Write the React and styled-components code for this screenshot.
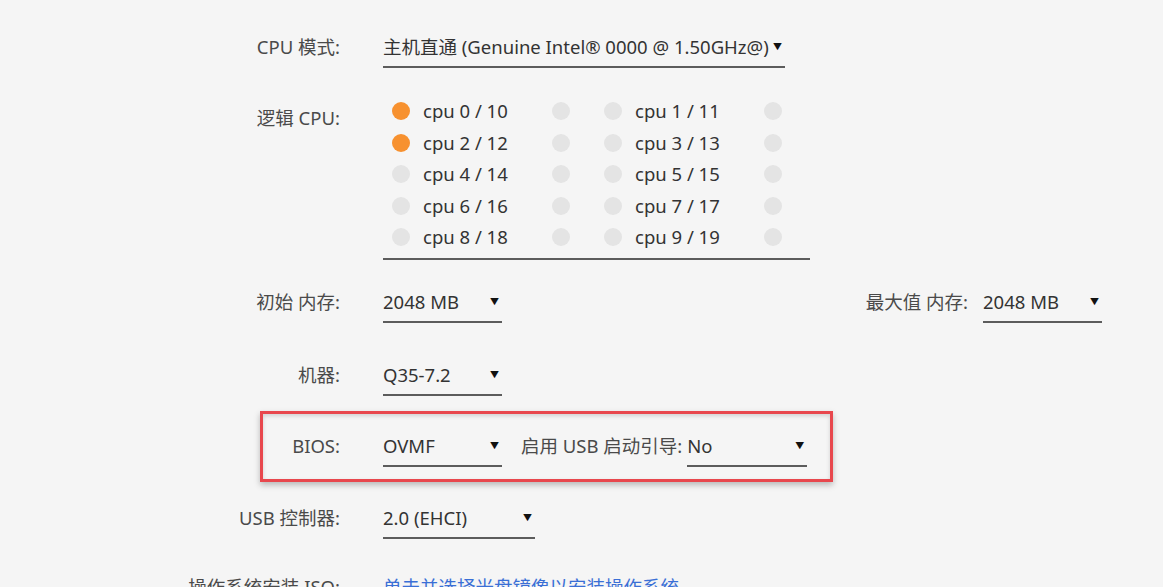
import React from "react";
import styled, { createGlobalStyle } from "styled-components";

const GlobalStyle = createGlobalStyle`
  html, body {
    margin: 0;
    padding: 0;
    background: #f5f5f5;
    overflow: hidden;
  }
  body {
    font-family: "Noto Sans", "Noto Sans CJK SC", sans-serif;
    color: #3a3a3a;
  }
`;

const cpus = [
  { a: "cpu 0 / 10", b: "cpu 1 / 11", on: true },
  { a: "cpu 2 / 12", b: "cpu 3 / 13", on: true },
  { a: "cpu 4 / 14", b: "cpu 5 / 15" },
  { a: "cpu 6 / 16", b: "cpu 7 / 17" },
  { a: "cpu 8 / 18", b: "cpu 9 / 19" },
];

const App = () => {
  return (
    <>
      <GlobalStyle />
      <Page>
        <Form>
          <Row $mt={0}>
            <Label>CPU 模式:</Label>
            <Select $w={402}>
              <span>主机直通 (Genuine Intel® 0000 @ 1.50GHz@)</span>
              <Arrow>▼</Arrow>
            </Select>
          </Row>

          <Row $mt={31} $top>
            <Label $pt={7}>逻辑 CPU:</Label>
            <CpuGrid>
              {cpus.map((row) => (
                <React.Fragment key={row.a}>
                  <CpuCell>
                    <Radio $on={row.on} />
                    <CpuName>{row.a}</CpuName>
                    <Radio />
                  </CpuCell>
                  <CpuCell>
                    <Radio />
                    <CpuName>{row.b}</CpuName>
                    <Radio />
                  </CpuCell>
                </React.Fragment>
              ))}
            </CpuGrid>
          </Row>

          <Row $mt={30}>
            <Label>初始 内存:</Label>
            <Select $w={119}>
              <span>2048 MB</span>
              <Arrow>▼</Arrow>
            </Select>
            <SideGroup>
              <SideLabel>最大值 内存:</SideLabel>
              <Select $w={119}>
                <span>2048 MB</span>
                <Arrow>▼</Arrow>
              </Select>
            </SideGroup>
          </Row>

          <Row $mt={40}>
            <Label>机器:</Label>
            <Select $w={119}>
              <span>Q35-7.2</span>
              <Arrow>▼</Arrow>
            </Select>
          </Row>

          <Row $mt={38}>
            <Highlight />
            <Label>BIOS:</Label>
            <Select $w={119}>
              <span>OVMF</span>
              <Arrow>▼</Arrow>
            </Select>
            <InlineLabel>启用 USB 启动引导:</InlineLabel>
            <Select $w={120}>
              <span>No</span>
              <Arrow>▼</Arrow>
            </Select>
          </Row>

          <Row $mt={39}>
            <Label>USB 控制器:</Label>
            <Select $w={152}>
              <span>2.0 (EHCI)</span>
              <Arrow>▼</Arrow>
            </Select>
          </Row>

          <Row $mt={36}>
            <Label>操作系统安装 ISO:</Label>
            <Link>单击并选择光盘镜像以安装操作系统</Link>
          </Row>
        </Form>
      </Page>
    </>
  );
};

const Page = styled.div`
  height: 587px;
  padding-top: 35px;
  box-sizing: border-box;
  overflow: hidden;
`;

const Form = styled.div`
  width: 942px;
  padding-left: 160px;
  display: flex;
  flex-direction: column;
`;

const Row = styled.div`
  position: relative;
  display: flex;
  align-items: ${(p) => (p.$top ? "flex-start" : "center")};
  margin-top: ${(p) => p.$mt}px;
  font-size: 18.5px;
`;

const Label = styled.div`
  width: 180px;
  flex-shrink: 0;
  margin-right: 43px;
  text-align: right;
  line-height: 24px;
  padding-top: ${(p) => p.$pt || 0}px;
  padding-bottom: ${(p) => (p.$pt ? 0 : 9)}px;
  color: #4a4a4a;
  white-space: nowrap;
`;

const Select = styled.div`
  width: ${(p) => p.$w}px;
  box-sizing: border-box;
  display: flex;
  align-items: center;
  justify-content: space-between;
  line-height: 24px;
  padding: 0 2px 7px 0;
  border-bottom: 2px solid #5c5c5c;
  color: #333;
  white-space: nowrap;
`;

const Arrow = styled.span`
  font-size: 9px;
  color: #111;
  margin-left: 2px;
  padding-right: 1px;
`;

const SideGroup = styled.div`
  margin-left: auto;
  display: flex;
  align-items: center;
`;

const SideLabel = styled.div`
  margin-right: 15px;
  line-height: 24px;
  padding-bottom: 9px;
  color: #4a4a4a;
  white-space: nowrap;
`;

const InlineLabel = styled.div`
  margin: 0 5px 0 19px;
  line-height: 24px;
  padding-bottom: 9px;
  color: #4a4a4a;
  white-space: nowrap;
`;

const Highlight = styled.div`
  position: absolute;
  left: 100px;
  top: -23px;
  width: 573px;
  height: 71px;
  box-sizing: border-box;
  border: 3px solid #e8474d;
  box-shadow: 0 3px 6px rgba(0, 0, 0, 0.25), inset 0 2px 4px rgba(0, 0, 0, 0.15);
  pointer-events: none;
`;

const CpuGrid = styled.div`
  width: 427px;
  box-sizing: border-box;
  display: grid;
  grid-template-columns: repeat(2, auto);
  justify-content: start;
  column-gap: 34px;
  row-gap: 7.5px;
  padding: 0 0 9px 9px;
  border-bottom: 2px solid #5c5c5c;
`;

const CpuCell = styled.div`
  display: flex;
  align-items: center;
  height: 24px;
`;

const Radio = styled.span`
  width: 18px;
  height: 18px;
  border-radius: 50%;
  background: ${(p) => (p.$on ? "#f7912f" : "#e4e4e4")};
  flex-shrink: 0;
`;

const CpuName = styled.span`
  width: 142px;
  padding-left: 13px;
  box-sizing: border-box;
  line-height: 24px;
  color: #333;
  white-space: nowrap;
`;

const Link = styled.a`
  color: #3a6fd6;
  line-height: 24px;
  padding-bottom: 9px;
  cursor: pointer;
`;

export default App;
